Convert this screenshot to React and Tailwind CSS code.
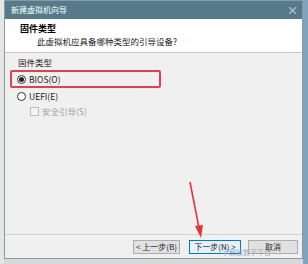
import React from 'react'

const font = { fontFamily: '"Noto Sans CJK SC", "Liberation Sans", sans-serif' }

export default function App() {
  return (
    <div className="w-[308px] h-[264px] bg-[#d9d9d9] flex overflow-hidden relative" style={font}>
      <div className="w-[4px] bg-[#e6e6e6]" />
      {/* dialog */}
      <div className="w-[299px] h-[259px] flex flex-col border border-[#8a9aa3] bg-[#f0f0f0]">
        {/* title bar */}
        <div className="h-[18px] bg-[#557b8b] flex items-center justify-between pl-[6px] pr-[4px]">
          <span className="text-[8px] text-white leading-none">新建虚拟机向导</span>
          <span className="text-[11px] text-white/80 leading-none">×</span>
        </div>
        {/* header */}
        <div className="h-[34px] bg-white border-b border-[#c8c8c8] pl-[15px] pt-[4px]">
          <div className="text-[9px] font-bold text-black leading-[12px]">固件类型</div>
          <div className="text-[8.5px] text-[#222] leading-[12px] pl-[17px]">此虚拟机应具备哪种类型的引导设备?</div>
        </div>
        {/* body */}
        <div className="flex-1 px-[5px] pt-[4px] flex flex-col">
          <div className="text-[8.5px] text-[#222] leading-[11px] pl-[8px]">固件类型</div>
          <div className="mt-[2px] w-[151px] h-[18px] border-2 border-[#e0424d] rounded-[2px] flex items-center pl-[5px] gap-[3px]">
            <span className="w-[9px] h-[9px] rounded-full border border-[#333] bg-white flex items-center justify-center">
              <span className="w-[5px] h-[5px] rounded-full bg-[#222]" />
            </span>
            <span className="text-[8.5px] text-[#222] leading-none">BIOS(O)</span>
          </div>
          <div className="mt-[3px] ml-[7px] flex items-center gap-[3px] h-[11px]">
            <span className="w-[9px] h-[9px] rounded-full border border-[#333] bg-white" />
            <span className="text-[8.5px] text-[#222] leading-none">UEFI(E)</span>
          </div>
          <div className="mt-[4px] ml-[20px] flex items-center gap-[3px] h-[11px]">
            <span className="w-[9px] h-[9px] border border-[#bcbcbc] bg-[#f4f4f4]" />
            <span className="text-[8.5px] text-[#a0a0a0] leading-none">安全引导(S)</span>
          </div>
        </div>
        {/* footer */}
        <div className="h-[24px] border-t border-[#d2d2d2] flex items-center justify-end pr-[4px]">
          <div className="w-[47px] h-[14px] border border-[#adadad] bg-[#e1e1e1] flex items-center justify-center text-[8px] text-[#222] leading-none">&lt; 上一步(B)</div>
          <div className="ml-[9px] w-[52px] h-[14px] border border-[#0078d7] bg-[#e5f1fb] flex items-center justify-center text-[8px] text-[#222] leading-none">下一步(N) &gt;</div>
          <div className="ml-[7px] w-[50px] h-[14px] border border-[#adadad] bg-[#e1e1e1] flex items-center justify-center text-[8px] text-[#222] leading-none">取消</div>
        </div>
      </div>
      <div className="flex-1 bg-[#7fa3b8]" />
      {/* watermark */}
      <span className="absolute left-[222px] top-[249px] text-[7px] text-[#8c9aa8]/80 leading-none">字解放数字平台</span>
      {/* red arrow */}
      <svg className="absolute left-0 top-0" width="308" height="264" viewBox="0 0 308 264">
        <line x1="190" y1="182" x2="199" y2="228" stroke="#e8333a" strokeWidth="1.6" />
        <polygon points="195,226 203,225 201,238" fill="#e8333a" />
      </svg>
    </div>
  )
}
